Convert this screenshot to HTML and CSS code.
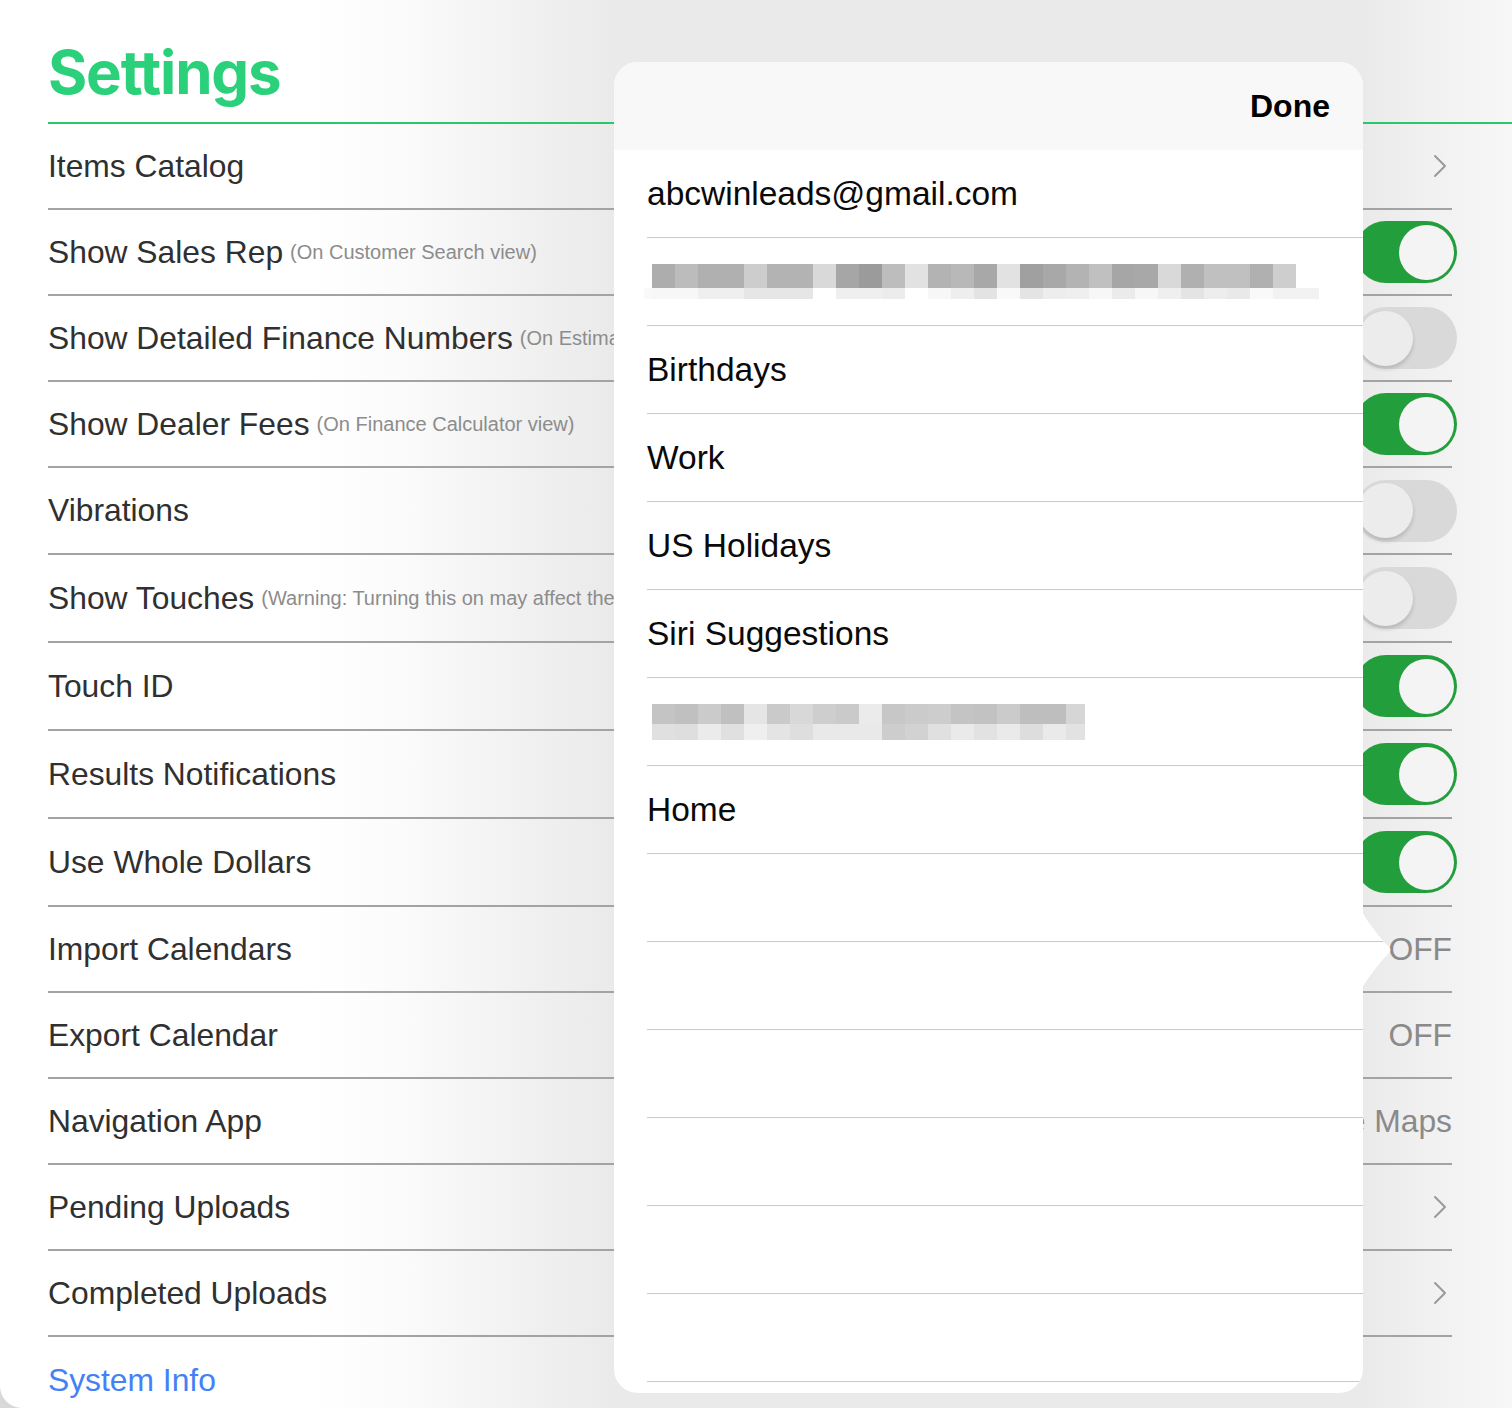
FILE: index.html
```html
<!DOCTYPE html>
<html lang="en">
<head>
<meta charset="utf-8">
<title>Settings</title>
<link rel="stylesheet" href="styles.css">
</head>
<body>
<div class="screen">
  <div class="settings">
    <header class="settings-head"><h1 class="title">Settings</h1></header>
    <ul class="list">
      <li class="row"><span class="label">Items Catalog</span><span class="ctrl"><svg class="chev" viewBox="0 0 14 24"><path d="M2 2 L12 12 L2 22" /></svg></span></li>
      <li class="row"><span class="label">Show Sales Rep</span><span class="sub">(On Customer Search view)</span><span class="ctrl"><span class="toggle on"><span class="knob"></span></span></span></li>
      <li class="row"><span class="label">Show Detailed Finance Numbers</span><span class="sub">(On Estimate view)</span><span class="ctrl"><span class="toggle off"><span class="knob"></span></span></span></li>
      <li class="row"><span class="label">Show Dealer Fees</span><span class="sub">(On Finance Calculator view)</span><span class="ctrl"><span class="toggle on"><span class="knob"></span></span></span></li>
      <li class="row h87"><span class="label">Vibrations</span><span class="ctrl"><span class="toggle off"><span class="knob"></span></span></span></li>
      <li class="row h88"><span class="label">Show Touches</span><span class="sub">(Warning: Turning this on may affect the app performance)</span><span class="ctrl"><span class="toggle off"><span class="knob"></span></span></span></li>
      <li class="row h88"><span class="label">Touch ID</span><span class="ctrl"><span class="toggle on"><span class="knob"></span></span></span></li>
      <li class="row h88"><span class="label">Results Notifications</span><span class="ctrl"><span class="toggle on"><span class="knob"></span></span></span></li>
      <li class="row h88"><span class="label">Use Whole Dollars</span><span class="ctrl"><span class="toggle on"><span class="knob"></span></span></span></li>
      <li class="row"><span class="label">Import Calendars</span><span class="ctrl"><span class="value">OFF</span></span></li>
      <li class="row"><span class="label">Export Calendar</span><span class="ctrl"><span class="value">OFF</span></span></li>
      <li class="row"><span class="label">Navigation App</span><span class="ctrl"><span class="value">Apple Maps</span></span></li>
      <li class="row"><span class="label">Pending Uploads</span><span class="ctrl"><svg class="chev" viewBox="0 0 14 24"><path d="M2 2 L12 12 L2 22" /></svg></span></li>
      <li class="row"><span class="label">Completed Uploads</span><span class="ctrl"><svg class="chev" viewBox="0 0 14 24"><path d="M2 2 L12 12 L2 22" /></svg></span></li>
    </ul>
    <div class="sysinfo">System Info</div>
  </div>

  <div class="popover">
    <div class="pop-head"><span class="done">Done</span></div>
    <ul class="pop-list">
      <li class="pop-row">abcwinleads@gmail.com</li>
      <li class="pop-row"><div class="pix pix1"><div class="pix-top"></div><div class="pix-bot"></div></div></li>
      <li class="pop-row">Birthdays</li>
      <li class="pop-row">Work</li>
      <li class="pop-row">US Holidays</li>
      <li class="pop-row">Siri Suggestions</li>
      <li class="pop-row"><div class="pix pix2"><div class="pix-top"></div><div class="pix-bot"></div></div></li>
      <li class="pop-row">Home</li>
      <li class="pop-row"></li>
      <li class="pop-row"></li>
      <li class="pop-row"></li>
      <li class="pop-row"></li>
      <li class="pop-row"></li>
      <li class="pop-row"></li>
    </ul>
  </div>
  <svg class="pop-arrow" viewBox="0 0 31 76"><path d="M0 0 C6 10 18 26 26 34 Q31 38 26 42 C18 50 6 66 0 76 Z" fill="#ffffff"/><line x1="0" y1="29.5" x2="21" y2="29.5" stroke="#c9c9c9" stroke-width="1"/></svg>
</div>
</body>
</html>
```

FILE: styles.css
```css
body {
  margin: 0;
  background: #d8d8d8;
}

.screen {
  position: relative;
  width: 1512px;
  height: 1408px;
  background: linear-gradient(90deg,
    #ffffff 0, #ffffff 310px, #fbfbfb 400px, #f3f3f3 500px,
    #eaeaea 614px, #eaeaea 1363px, #f0f0f0 1420px, #f7f7f7 1512px);
  overflow: hidden;
  border-bottom-left-radius: 22px;
  font-family: "Liberation Sans", Arial, sans-serif;
}

.settings {
  padding-left: 48px;
}

.settings-head {
  padding-top: 36px;
  height: 86px;
  border-bottom: 2px solid #28c86f;
}

.title {
  margin: 0;
  font-family: Inter, "Liberation Sans", sans-serif;
  font-weight: 700;
  font-size: 60px;
  line-height: 72px;
  letter-spacing: -1.2px;
  color: #2bd07b;
}

.list {
  list-style: none;
  margin: 0 60px 0 0;
  padding: 0;
}

.row {
  display: flex;
  align-items: center;
  height: 86px;
  box-sizing: border-box;
  border-bottom: 2px solid #a3a3a3;
  white-space: nowrap;
}

.row.h87 { height: 87px; }
.row.h88 { height: 88px; }

.label {
  flex-shrink: 0;
  font-size: 31.8px;
  color: #303030;
}

.sub {
  flex-shrink: 0;
  margin-left: 7px;
  font-size: 20px;
  color: #8c8c8c;
}

.ctrl {
  margin-left: auto;
  display: flex;
  align-items: center;
}

.chev {
  width: 14px;
  height: 24px;
  margin-right: 5px;
}

.chev path {
  fill: none;
  stroke: #9a9a9a;
  stroke-width: 2;
  stroke-linecap: round;
  stroke-linejoin: round;
}

.toggle {
  width: 102px;
  height: 62px;
  border-radius: 31px;
  box-sizing: border-box;
  padding: 0 3px;
  display: flex;
  align-items: center;
  margin-right: -5px;
}

.toggle.on {
  background: #239e3d;
  justify-content: flex-end;
}

.toggle.off {
  background: #d9d9d9;
}

.knob {
  width: 55px;
  height: 55px;
  border-radius: 50%;
  background: #f4f4f4;
}

.toggle.off .knob {
  background: #ececec;
  box-shadow: 0 3px 4px rgba(0, 0, 0, 0.16);
}

.value {
  font-size: 31.8px;
  color: #8a8a8a;
}

.sysinfo {
  height: 86px;
  display: flex;
  align-items: center;
  font-size: 31.8px;
  color: #4581f6;
}

/* Popover */
.popover {
  position: absolute;
  left: 614px;
  top: 62px;
  width: 749px;
  height: 1331px;
  background: #ffffff;
  border-radius: 24px;
  overflow: hidden;
}

.pop-head {
  height: 88px;
  box-sizing: border-box;
  padding-right: 33px;
  background: #f8f8f8;
  display: flex;
  align-items: center;
  justify-content: flex-end;
}

.done {
  font-weight: 700;
  font-size: 32px;
  color: #000000;
}

.pop-list {
  list-style: none;
  margin: 0;
  padding: 0 0 0 33px;
}

.pop-row {
  height: 88px;
  box-sizing: border-box;
  border-bottom: 1px solid #c9c9c9;
  display: flex;
  align-items: center;
  font-size: 33.5px;
  color: #0a0a0a;
}

.pix1 {
  margin-left: -3px;
}

.pix1 .pix-top {
  margin-left: 8px;
  width: 644px;
  height: 24px;
  background: linear-gradient(90deg,
    #adadad 0 23px, #bcbcbc 23px 46px, #b0b0b0 46px 69px, #b0b0b0 69px 92px,
    #cdcdcd 92px 115px, #b3b3b3 115px 138px, #b3b3b3 138px 161px, #d9d9d9 161px 184px,
    #a6a6a6 184px 207px, #9b9b9b 207px 230px, #bdbdbd 230px 253px, #e2e2e2 253px 276px,
    #b3b3b3 276px 299px, #b8b8b8 299px 322px, #a8a8a8 322px 345px, #e2e2e2 345px 368px,
    #a0a0a0 368px 391px, #a8a8a8 391px 414px, #b3b3b3 414px 437px, #c0c0c0 437px 460px,
    #a6a6a6 460px 483px, #a8a8a8 483px 506px, #d9d9d9 506px 529px, #b0b0b0 529px 552px,
    #c0c0c0 552px 575px, #c0c0c0 575px 598px, #b0b0b0 598px 621px, #cecece 621px 644px);
}

.pix1 .pix-bot {
  width: 675px;
  height: 11px;
  background: linear-gradient(90deg,
    #f9f9f9 0 8px,
    #f7f7f7 8px 31px, #f7f7f7 31px 54px, #efefef 54px 77px, #efefef 77px 100px,
    #e6e6e6 100px 123px, #e6e6e6 123px 146px, #e6e6e6 146px 169px, #ffffff 169px 192px,
    #efefef 192px 215px, #efefef 215px 238px, #ececec 238px 261px, #ffffff 261px 284px,
    #f7f7f7 284px 307px, #eeeeee 307px 330px, #e3e3e3 330px 353px, #f9f9f9 353px 376px,
    #e4e4e4 376px 399px, #ededed 399px 422px, #efefef 422px 445px, #f7f7f7 445px 468px,
    #ebebeb 468px 491px, #f7f7f7 491px 514px, #efefef 514px 537px, #e4e4e4 537px 560px,
    #ededed 560px 583px, #e9e9e9 583px 606px, #f9f9f9 606px 629px, #f2f2f2 629px 652px,
    #f2f2f2 652px 675px);
}

.pix2 {
  margin-left: 5px;
}

.pix2 .pix-top {
  width: 433px;
  height: 20px;
  background: linear-gradient(90deg,
    #c4c4c4 0 23px, #c0c0c0 23px 46px, #cbcbcb 46px 69px, #c0c0c0 69px 92px,
    #e5e5e5 92px 115px, #cacaca 115px 138px, #d8d8d8 138px 161px, #cecece 161px 184px,
    #cacaca 184px 207px, #ebebeb 207px 230px, #c7c7c7 230px 253px, #cbcbcb 253px 276px,
    #cdcdcd 276px 299px, #c4c4c4 299px 322px, #c2c2c2 322px 345px, #cbcbcb 345px 368px,
    #bebebe 368px 391px, #bebebe 391px 414px, #d6d6d6 414px 433px);
}

.pix2 .pix-bot {
  width: 433px;
  height: 16px;
  background: linear-gradient(90deg,
    #e0e0e0 0 23px, #dedede 23px 46px, #ebebeb 46px 69px, #e0e0e0 69px 92px,
    #efefef 92px 115px, #e4e4e4 115px 138px, #dedede 138px 161px, #e9e9e9 161px 184px,
    #e9e9e9 184px 207px, #e9e9e9 207px 230px, #cdcdcd 230px 253px, #d2d2d2 253px 276px,
    #e0e0e0 276px 299px, #eaeaea 299px 322px, #e2e2e2 322px 345px, #eaeaea 345px 368px,
    #dddddd 368px 391px, #eaeaea 391px 414px, #e2e2e2 414px 433px);
}

.pop-arrow {
  position: absolute;
  left: 1362px;
  top: 912px;
  width: 31px;
  height: 76px;
}
```
